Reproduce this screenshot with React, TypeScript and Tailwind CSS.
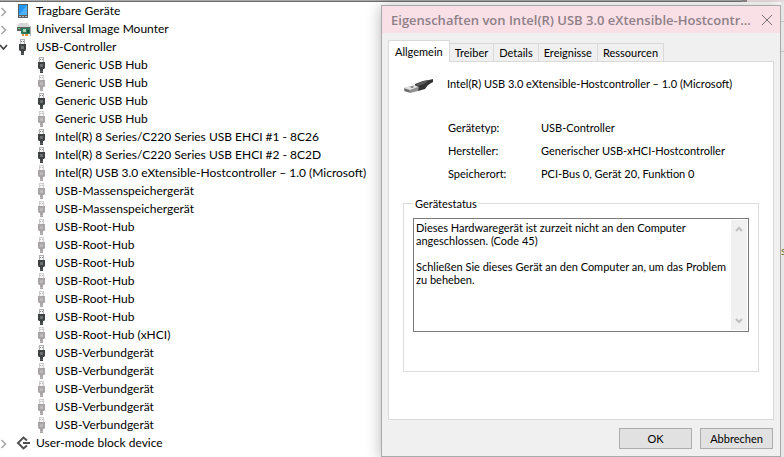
import React from "react";

type Device = { name: string; active?: boolean };

const devices: Device[] = [
  { name: "Generic USB Hub", active: true },
  { name: "Generic USB Hub" },
  { name: "Generic USB Hub", active: true },
  { name: "Generic USB Hub" },
  { name: "Intel(R) 8 Series/C220 Series USB EHCI #1 - 8C26", active: true },
  { name: "Intel(R) 8 Series/C220 Series USB EHCI #2 - 8C2D", active: true },
  { name: "Intel(R) USB 3.0 eXtensible-Hostcontroller – 1.0 (Microsoft)" },
  { name: "USB-Massenspeichergerät" },
  { name: "USB-Massenspeichergerät" },
  { name: "USB-Root-Hub" },
  { name: "USB-Root-Hub" },
  { name: "USB-Root-Hub", active: true },
  { name: "USB-Root-Hub" },
  { name: "USB-Root-Hub" },
  { name: "USB-Root-Hub", active: true },
  { name: "USB-Root-Hub (xHCI)" },
  { name: "USB-Verbundgerät", active: true },
  { name: "USB-Verbundgerät" },
  { name: "USB-Verbundgerät" },
  { name: "USB-Verbundgerät" },
  { name: "USB-Verbundgerät" },
];

const details = [
  { label: "Gerätetyp:", value: "USB-Controller" },
  { label: "Hersteller:", value: "Generischer USB-xHCI-Hostcontroller" },
  { label: "Speicherort:", value: "PCI-Bus 0, Gerät 20, Funktion 0" },
];

// USB plug, standing upright
const UsbIcon: React.FC<{ active?: boolean }> = ({ active }) => (
  <svg width="16" height="16" viewBox="0 0 16 16" className="shrink-0" aria-hidden="true">
    <path d="M4 0h5v6H4z" fill={active ? "#b0b0b0" : "#cfcfcf"} />
    <path d="M5 1h3v4H5z" fill="#f4f4f4" />
    <path d="M5 2h1v1H5zM7 2h1v1H7z" fill={active ? "#8a8a8a" : "#bdbdbd"} />
    <path d="M3 5h7v6l-1 1H8v4H5v-4H4l-1-1z" fill={active ? "#3f4242" : "#a9a5a7"} />
    <path d="M5 7h3v3H5z" fill={active ? "#6d7070" : "#bcb9ba"} />
    <path d="M5 14h3v1H5z" fill={active ? "#5c5f5f" : "#b8b5b6"} />
  </svg>
);

const Chevron: React.FC<{ open?: boolean }> = ({ open }) => (
  <svg width="8" height="12" viewBox="0 0 8 12" fill="none" className="shrink-0" aria-hidden="true">
    {open ? (
      <path d="M0 4l3.500 4L7 4" stroke="#404040" strokeWidth="1.600" />
    ) : (
      <path d="M1.500 3l4 4-4 4" stroke="#a6a6a6" strokeWidth="1.600" />
    )}
  </svg>
);

const TabletIcon = () => (
  <svg width="16" height="16" viewBox="0 0 16 16" className="shrink-0" aria-hidden="true">
    <path d="M2 1h10v14H2z" fill="#5a5f63" />
    <path d="M3 2h8v10H3z" fill="#2196f3" />
    <path d="M3 12l8-10v10z" fill="#4db2ff" />
    <path d="M3 13h2v1H3zM6 13h2v1H6zM9 13h2v1H9z" fill="#b8bcc0" />
  </svg>
);

const MounterIcon = () => (
  <svg width="16" height="16" viewBox="0 0 16 16" className="shrink-0" aria-hidden="true">
    <path d="M3 2h9l2 4H1z" fill="#d6d6d6" />
    <path d="M1 6h13v4H1z" fill="#5f6262" />
    <path d="M2 7h2v1H2z" fill="#62d36f" />
    <path d="M5 7h9v6H5z" fill="#2c7a5c" />
    <path d="M7 8h3v3H7z" fill="#a9d3bb" />
    <path d="M11 9h2v3h-2z" fill="#155842" />
    <path d="M6 13h2v2H6zM9 13h3v2H9z" fill="#e9963a" />
    <path d="M14 5h1v10h-1z" fill="#b0b0b0" />
  </svg>
);

const BlockIcon = () => (
  <svg width="16" height="16" viewBox="0 0 16 16" fill="none" className="shrink-0" aria-hidden="true">
    <path d="M11 5.500L7.500 2.500 2 8l5.500 5.500L11 10.500M7 8h7" stroke="#505050" strokeWidth="2" />
  </svg>
);

const PlugIcon = () => (
  <svg width="32" height="32" viewBox="0 0 32 32" className="shrink-0" aria-hidden="true">
    <path d="M12 17l8-3 6-1 4-1v3l-5 3-3 4-7 2-3-3z" fill="#343434" />
    <path d="M13 17l8-3 5-1-5 4-6 2z" fill="#5c5c5c" />
    <path d="M1 21l11-3 4 2-1 4-8 2-6-2z" fill="#8f8f8f" />
    <path d="M1 21l10-3 4 2-8 3z" fill="#e2e2e2" />
    <path d="M2 22l4 1v2l-4-1zM7 20l2-1 2 1-2 1z" fill="#6a6a6a" />
  </svg>
);

type BranchProps = { open?: boolean; icon: React.ReactNode; name: string; children?: React.ReactNode };

const Branch: React.FC<BranchProps> = ({ open, icon, name, children }) => (
  <li role="treeitem" aria-expanded={!!open}>
    <div className="flex h-[18px] items-center">
      <Chevron open={open} />
      <span className="ml-2 mr-1">{icon}</span>
      {name}
    </div>
    {children}
  </li>
);

const DeviceTree = () => (
  <ul
    role="tree"
    className="min-w-0 flex-1 overflow-hidden font-['Lato',sans-serif] text-xs leading-[18px] whitespace-nowrap text-black"
  >
    <Branch icon={<TabletIcon />} name="Tragbare Geräte" />
    <Branch icon={<MounterIcon />} name="Universal Image Mounter" />
    <Branch open icon={<UsbIcon active />} name="USB-Controller">
      <ul role="group" className="pl-[35px]">
        {devices.map((device, i) => (
          <li key={i} role="treeitem" className="flex h-[18px] items-center gap-1">
            <UsbIcon active={device.active} />
            {device.name}
          </li>
        ))}
      </ul>
    </Branch>
    <Branch icon={<BlockIcon />} name="User-mode block device" />
  </ul>
);

const tabs = ["Treiber", "Details", "Ereignisse", "Ressourcen"];

const PropertiesDialog = () => (
  <section
    role="dialog"
    aria-labelledby="dialog-title"
    className="mt-[3px] flex w-[400px] shrink-0 flex-col border border-[#a9a9a9] bg-[#f0f0f0] font-['Lato',sans-serif] text-[11px] leading-[13px] text-black shadow-[0_2px_14px_rgba(0,0,0,0.3)]"
  >
    {/* Title bar */}
    <header className="flex h-[27px] items-center bg-[#f9dfe6] pl-[9px]">
      <h1
        id="dialog-title"
        className="min-w-0 flex-1 truncate font-['Open_Sans',sans-serif] text-[13px] leading-5 font-semibold text-[#8e8087]"
      >
        Eigenschaften von Intel(R) USB 3.0 eXtensible-Hostcontr...
      </h1>
      <button type="button" aria-label="Schließen" className="flex h-full w-[26px] items-center justify-center">
        <svg width="12" height="12" viewBox="0 0 12 12" stroke="#777075" aria-hidden="true">
          <path d="M1 1l10 10M11 1L1 11" />
        </svg>
      </button>
    </header>

    <div className="px-1.5 pt-[7px]">
      {/* Tabs */}
      <div role="tablist" className="flex items-end">
        <button
          type="button"
          role="tab"
          aria-selected="true"
          className="-mb-px h-[22px] border border-b-0 border-[#d9d9d9] bg-white px-1.5"
        >
          Allgemein
        </button>
        {tabs.map((tab) => (
          <button
            key={tab}
            type="button"
            role="tab"
            aria-selected="false"
            className="h-[18px] border border-b-0 border-l-0 border-[#d9d9d9] px-[5px]"
          >
            {tab}
          </button>
        ))}
      </div>

      <div role="tabpanel" className="border border-[#d9d9d9] bg-white px-3.5 pt-[5px] pb-[47px]">
        <div className="flex items-center">
          <PlugIcon />
          <h2 className="ml-3">Intel(R) USB 3.0 eXtensible-Hostcontroller – 1.0 (Microsoft)</h2>
        </div>

        <dl className="mt-[22px] ml-[45px] grid grid-cols-[93px_1fr] gap-y-2.5">
          {details.map((item) => (
            <React.Fragment key={item.label}>
              <dt>{item.label}</dt>
              <dd>{item.value}</dd>
            </React.Fragment>
          ))}
        </dl>

        <fieldset className="mt-[17px] border border-[#dcdcdc] px-[9px] pt-2 pb-[39px]">
          <legend className="px-0.5">Gerätestatus</legend>
          <div className="flex h-[114px] border border-[#7a7a7a] p-px">
            <div className="flex-1 px-px pt-px">
              <p>Dieses Hardwaregerät ist zurzeit nicht an den Computer angeschlossen. (Code 45)</p>
              <p className="mt-[13px]">
                Schließen Sie dieses Gerät an den Computer an, um das Problem zu beheben.
              </p>
            </div>
            <div className="flex w-4 flex-col items-center justify-between bg-[#f0f0f0] py-1.5">
              <svg width="8" height="6" viewBox="0 0 8 6" fill="none" stroke="#bfbfbf" strokeWidth="2">
                <path d="M1 5l3-3 3 3" />
              </svg>
              <svg width="8" height="6" viewBox="0 0 8 6" fill="none" stroke="#bfbfbf" strokeWidth="2">
                <path d="M1 1l3 3 3-3" />
              </svg>
            </div>
          </div>
        </fieldset>
      </div>
    </div>

    <footer className="flex justify-end gap-2 px-[7px] pt-2 pb-[7px]">
      <button type="button" className="h-[21px] w-[73px] border border-[#adadad] bg-[#e1e1e1]">
        OK
      </button>
      <button type="button" className="h-[21px] w-[73px] border border-[#adadad] bg-[#e1e1e1]">
        Abbrechen
      </button>
    </footer>
  </section>
);

// Sliver of the window behind, right of the dialog
const BackWindow = () => (
  <div className="flex w-[3px] shrink-0 flex-col self-stretch overflow-hidden bg-[#e6e6e6] text-[11px] leading-[13px] text-[#6b6a2c]">
    <div className="h-5 border-b border-[#c4c4c4]" />
    <div className="h-[30px] border-b border-[#c4c4c4]" />
    <span className="mt-48">s.</span>
  </div>
);

const App: React.FC = () => {
  return (
    <main className="min-h-screen overflow-hidden bg-white">
      {/* Lower frame of the window above */}
      <div className="flex h-0.5">
        <div className="flex-1 border-b border-[#6e6e6e] bg-[#a8a8a8]" />
        <div className="w-1.5 bg-[#8f8b8d]" />
        <div className="w-[37px] bg-[#eadfe2]" />
      </div>
      <div className="flex items-start">
        <DeviceTree />
        <PropertiesDialog />
        <BackWindow />
      </div>
    </main>
  );
};

export default App;
